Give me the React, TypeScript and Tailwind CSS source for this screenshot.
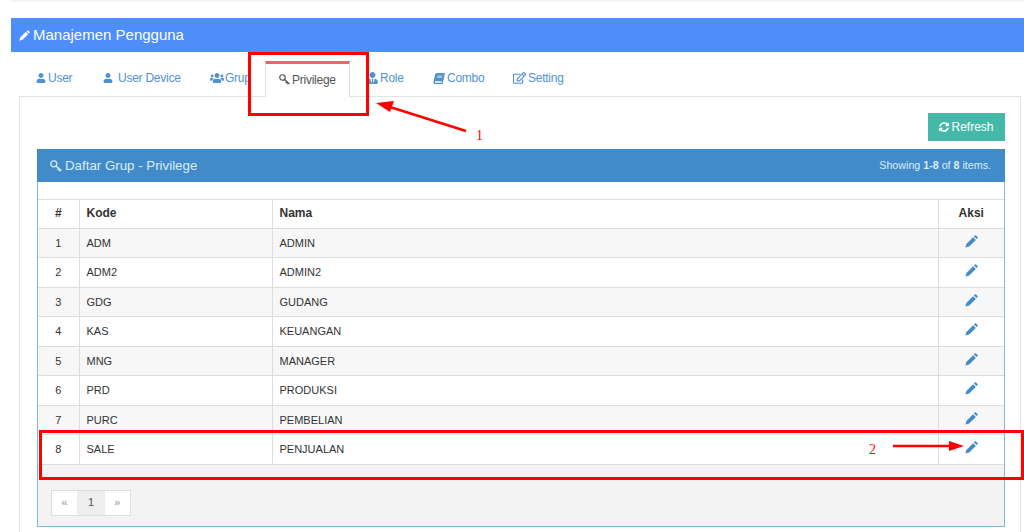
import { FaBook, FaRegEdit, FaSyncAlt, FaUser, FaUsers, FaUserTie } from "react-icons/fa";

const rows = [
  ["1", "ADM", "ADMIN"],
  ["2", "ADM2", "ADMIN2"],
  ["3", "GDG", "GUDANG"],
  ["4", "KAS", "KEUANGAN"],
  ["5", "MNG", "MANAGER"],
  ["6", "PRD", "PRODUKSI"],
  ["7", "PURC", "PEMBELIAN"],
  ["8", "SALE", "PENJUALAN"],
];

// glyphicon style key, ring at the top left
const KeyIcon = ({ className }: { className: string }) => (
  <svg viewBox="0 0 12 12" fill="none" stroke="currentColor" className={className}>
    <circle cx="3.8" cy="3.8" r="3" strokeWidth="1.3" />
    <path d="M6 6l5.4 4.8M8.6 8.3l-1.3 1.5M10.2 9.7l-1.2 1.4" strokeWidth="1.4" />
  </svg>
);

const PencilIcon = ({ className }: { className: string }) => (
  <svg viewBox="0 0 12 12" fill="currentColor" className={className}>
    <path d="M0.4 11.6l0.9-3.4 6.2-6.2 2.5 2.5-6.2 6.2z" />
    <path d="M8.2 1.3l0.8-0.8a0.9 0.9 0 0 1 1.2 0l1.3 1.3a0.9 0.9 0 0 1 0 1.2l-0.8 0.8z" />
  </svg>
);

const Tabs = () => (
  <div className="h-[44px] flex items-end pl-[21px] text-[12px] tracking-[-0.25px] text-[#4f92cf]">
    <a className="w-[67px] h-[35px] pl-[15px] pb-px flex items-center gap-[2px]">
      <FaUser className="w-[10px] h-[10px]" /> User
    </a>
    <a className="w-[107px] h-[35px] pl-[15px] pb-px flex items-center gap-[5px]">
      <FaUser className="w-[10px] h-[10px]" /> User Device
    </a>
    <a className="w-[70px] h-[35px] pl-[15px] pb-px flex items-center gap-px">
      <FaUsers className="w-[14px] h-[12px] shrink-0" /> Grup
    </a>
    <a className="relative z-10 w-[85px] h-[36px] -mb-px pl-[13px] pb-[2px] flex items-center gap-[2px] bg-white border-x border-[#ddd] border-t-[3px] border-t-[#f0636b] text-[#555]">
      <KeyIcon className="w-[11px] h-[11px]" /> Privilege
    </a>
    <a className="w-[68px] h-[35px] pl-[17px] pb-px flex items-center gap-[2px]">
      <FaUserTie className="w-[11px] h-[12px]" /> Role
    </a>
    <a className="w-[80px] h-[35px] pl-[15px] pb-px flex items-center gap-[2px]">
      <FaBook className="w-[12px] h-[11px] -skew-x-12" /> Combo
    </a>
    <a className="w-[79px] h-[35px] pl-[15px] pb-px flex items-center gap-[2px]">
      <FaRegEdit className="w-[13px] h-[12px]" /> Setting
    </a>
  </div>
);

const Table = () => (
  <table className="w-[966px] border-collapse table-fixed text-[11px] text-[#333]">
    <colgroup>
      <col className="w-[41px]" />
      <col className="w-[193px]" />
      <col className="w-[666px]" />
      <col className="w-[66px]" />
    </colgroup>
    <thead>
      <tr className="h-[28.5px] text-[12px] font-bold">
        <th className="border border-l-0 border-[#ddd] text-center pb-px">#</th>
        <th className="border border-[#ddd] text-left pl-[7px] pb-px">Kode</th>
        <th className="border border-[#ddd] text-left pl-[7px] pb-px">Nama</th>
        <th className="border border-r-0 border-[#ddd] text-center pb-px">Aksi</th>
      </tr>
    </thead>
    <tbody>
      {rows.map((r, i) => (
        <tr key={r[0]} className={i % 2 === 0 ? "h-[29.5px] bg-[#f7f7f7]" : "h-[29.5px] bg-white"}>
          <td className="border border-l-0 border-[#ddd] text-center">{r[0]}</td>
          <td className="border border-[#ddd] pl-[7px]">{r[1]}</td>
          <td className="border border-[#ddd] pl-[7px]">{r[2]}</td>
          <td className="border border-r-0 border-[#ddd]">
            <PencilIcon className="w-[13px] h-[13px] mx-auto -mt-[3px] text-[#428bca]" />
          </td>
        </tr>
      ))}
    </tbody>
  </table>
);

const Annotations = () => (
  <>
    <div className="absolute left-[248px] top-[52px] w-[121px] h-[64px] border-[3px] border-[#f00]" />
    <div className="absolute left-[39px] top-[430px] w-[985px] h-[50px] border-[3px] border-[#f00]" />
    <svg className="absolute left-0 top-0 w-[1024px] h-[532px]" viewBox="0 0 1024 532" fill="none">
      <line x1="466" y1="131" x2="390" y2="107" stroke="#f00" strokeWidth="2.5" />
      <polygon points="376,103 394,101 390,112" fill="#f00" />
      <line x1="893" y1="446" x2="950" y2="446" stroke="#f00" strokeWidth="2.5" />
      <polygon points="964,446 949,441 949,451" fill="#f00" />
    </svg>
    <span className="absolute left-[476px] top-[125px] text-[14px] text-[#f00] font-['Liberation_Serif',serif]">1</span>
    <span className="absolute left-[869px] top-[439px] text-[14px] text-[#f00] font-['Liberation_Serif',serif]">2</span>
  </>
);

export default function App() {
  return (
    <div className="relative w-[1024px] h-[532px] overflow-hidden bg-white font-['Liberation_Sans',sans-serif]">
      <div className="ml-[11px] h-[2px] bg-[#f5f5f5]" />
      <div className="ml-[11px] mt-[16px] h-[34px] bg-[#4d8efa] text-white flex items-center pl-[8px] gap-[3px] text-[15px]">
        <PencilIcon className="w-[11px] h-[11px]" /> Manajemen Pengguna
      </div>
      <Tabs />
      <div className="ml-[19px] mr-[3px] h-[440px] border border-b-0 border-[#e3e3e3] pl-[17px] pt-[16px]">
        <div className="w-[968px] flex justify-end">
          <button className="w-[77px] h-[28px] bg-[#46b8a9] text-white text-[12px] flex items-center justify-center gap-[2px]">
            <FaSyncAlt className="w-[10px] h-[10px]" /> Refresh
          </button>
        </div>
        <div className="mt-[8px] w-[968px] h-[378px] border border-t-0 border-[#7db9dc] bg-white flex flex-col">
          <div className="-mx-px h-[33px] shrink-0 bg-[#428bca] text-[#d9edf7] flex items-center justify-between pl-[13px] pr-[14px]">
            <span className="flex items-center gap-[3px] text-[13.3px]">
              <KeyIcon className="w-[12px] h-[12px]" /> Daftar Grup - Privilege
            </span>
            <span className="text-[10.7px]">
              Showing <b>1-8</b> of <b>8</b> items.
            </span>
          </div>
          <div className="h-[17px] shrink-0" />
          <Table />
          <div className="flex-1 bg-[#f3f3f3] pl-[13px] pt-[25px]">
            <div className="flex w-[80px] h-[26px] border border-[#ddd] text-[11px] bg-white">
              <span className="w-[26px] flex items-center justify-center text-[#999]">«</span>
              <span className="w-[28px] flex items-center justify-center bg-[#eee] text-[#555]">1</span>
              <span className="w-[26px] flex items-center justify-center text-[#999]">»</span>
            </div>
          </div>
        </div>
      </div>
      <Annotations />
    </div>
  );
}
